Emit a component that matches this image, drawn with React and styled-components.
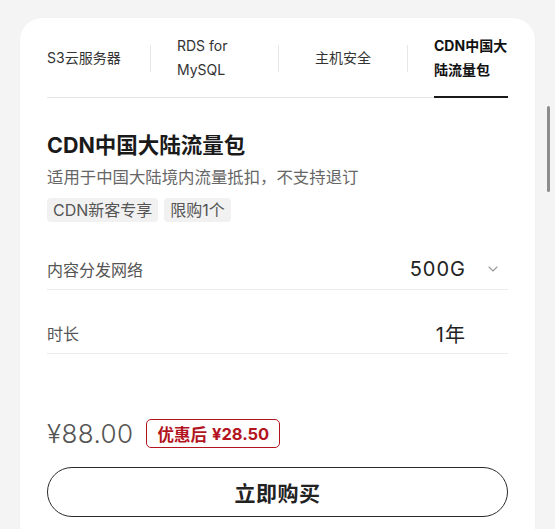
import React from "react";
import styled, { createGlobalStyle, css } from "styled-components";

const GlobalStyle = createGlobalStyle`
  html, body {
    margin: 0;
    padding: 0;
    background: #f4f4f4;
    overflow: hidden;
  }
  body {
    font-family: Inter, "Noto Sans CJK SC", "Noto Sans", sans-serif;
    -webkit-font-smoothing: antialiased;
  }
`;

const Page = styled.div`
  position: relative;
  height: 529px;
  padding: 18px 20px 0 20px;
  box-sizing: border-box;
  overflow: hidden;
`;

const ScrollThumb = styled.div`
  position: absolute;
  right: 5px;
  top: 106px;
  width: 3px;
  height: 86px;
  border-radius: 2px;
  background: #8c8c8c;
`;

const Card = styled.div`
  background: #fff;
  border-radius: 22px 22px 0 0;
  padding: 16px 27px 40px;
  box-shadow: 0 0 2px rgba(0, 0, 0, 0.03);
`;

const TabBar = styled.div`
  display: grid;
  grid-template-columns: 103px 1px 127px 1px 128px 1px 1fr;
  border-bottom: 1px solid #e6e6e6;
`;

const Tab = styled.div`
  position: relative;
  display: flex;
  align-items: center;
  justify-content: ${(p) => (p.$center ? "center" : "flex-start")};
  height: 48px;
  padding: 0 0 15px ${(p) => p.$pad || 0}px;
  font-size: 14px;
  line-height: 24px;
  color: #333;

  ${(p) =>
    p.$active &&
    css`
      font-weight: 700;
      color: #111;
      &::after {
        content: "";
        position: absolute;
        left: ${p.$pad || 0}px;
        right: 0;
        bottom: -1px;
        height: 2.5px;
        background: #1a1a1a;
      }
    `}
`;

const Sep = styled.div`
  width: 1px;
  height: 27px;
  margin-top: 11px;
  background: #e8e8e8;
`;

const Title = styled.h1`
  margin: 32px 0 0;
  font-size: 21.5px;
  line-height: 30px;
  font-weight: 700;
  color: #1a1a1a;
`;

const Subtitle = styled.p`
  margin: 5px 0 0;
  font-size: 16.4px;
  line-height: 24px;
  color: #666;
`;

const Tags = styled.div`
  display: flex;
  gap: 6px;
  margin-top: 9px;
`;

const Tag = styled.span`
  height: 24px;
  line-height: 24px;
  padding: 0 6px;
  border-radius: 4px;
  background: #f1f1f1;
  color: #555;
  font-size: 16px;
`;

const Rows = styled.div`
  margin-top: 4px;
`;

const Row = styled.div`
  display: flex;
  align-items: center;
  height: 40px;
  padding-top: 23px;
  border-bottom: 1px solid #ebebeb;
`;

const Label = styled.span`
  flex: 1;
  font-size: 16px;
  color: #555;
`;

const Value = styled.span`
  font-size: 20px;
  letter-spacing: 1px;
  color: #222;
`;

const Arrow = styled.span`
  display: flex;
  justify-content: flex-end;
  width: 42px;
  padding-right: 10px;
  box-sizing: border-box;
`;

const PriceRow = styled.div`
  display: flex;
  align-items: center;
  gap: 13px;
  margin-top: 64px;
`;

const Price = styled.span`
  font-size: 26px;
  font-weight: 300;
  color: #555;
  letter-spacing: 0.4px;
`;

const Badge = styled.span`
  height: 29px;
  box-sizing: border-box;
  display: inline-flex;
  align-items: center;
  gap: 5px;
  padding: 0 10px;
  border: 1.5px solid #b3141e;
  border-radius: 5px;
  color: #b3141e;
  font-size: 16.5px;
  font-weight: 700;
`;

const BuyButton = styled.button`
  display: block;
  width: 100%;
  height: 50px;
  margin-top: 18px;
  border: 1.5px solid #2a2a2a;
  border-radius: 25px;
  background: #fff;
  font-family: inherit;
  font-size: 21px;
  font-weight: 700;
  color: #222;
  letter-spacing: 0.5px;
`;

const Chevron = () => (
  <svg width="10" height="6" viewBox="0 0 10 6" fill="none">
    <path d="M1 1l4 4 4-4" stroke="#9a9a9a" strokeWidth="1.1" strokeLinecap="round" strokeLinejoin="round" />
  </svg>
);

const tabs = [
  { lines: ["S3云服务器"] },
  { lines: ["RDS for", "MySQL"], pad: 26 },
  { lines: ["主机安全"], center: true },
  { lines: ["CDN中国大", "陆流量包"], pad: 26, active: true },
];

export default function App() {
  return (
    <>
      <GlobalStyle />
      <Page>
        <Card>
          <TabBar>
            {tabs.map((t, i) => (
              <React.Fragment key={i}>
                {i > 0 && <Sep />}
                <Tab $pad={t.pad} $center={t.center} $active={t.active}>
                  <div>
                    {t.lines.map((l, j) => (
                      <div key={j}>{l}</div>
                    ))}
                  </div>
                </Tab>
              </React.Fragment>
            ))}
          </TabBar>

          <Title>CDN中国大陆流量包</Title>
          <Subtitle>适用于中国大陆境内流量抵扣，不支持退订</Subtitle>
          <Tags>
            <Tag>CDN新客专享</Tag>
            <Tag>限购1个</Tag>
          </Tags>

          <Rows>
            <Row>
              <Label>内容分发网络</Label>
              <Value>500G</Value>
              <Arrow>
                <Chevron />
              </Arrow>
            </Row>
            <Row>
              <Label>时长</Label>
              <Value>1年</Value>
              <Arrow />
            </Row>
          </Rows>

          <PriceRow>
            <Price>¥88.00</Price>
            <Badge>
              <span>优惠后</span>
              <span>¥28.50</span>
            </Badge>
          </PriceRow>

          <BuyButton>立即购买</BuyButton>
        </Card>
        <ScrollThumb />
      </Page>
    </>
  );
}
